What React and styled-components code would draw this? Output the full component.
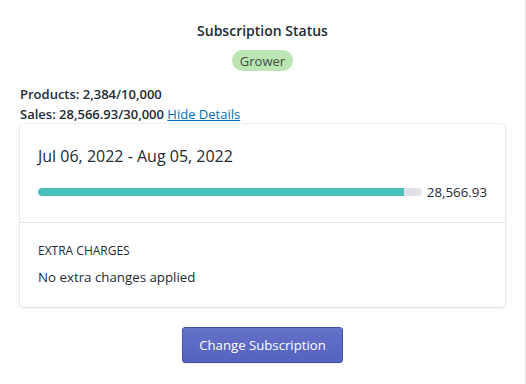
import React from 'react'
import styled, { createGlobalStyle } from 'styled-components'

const GlobalStyle = createGlobalStyle`
  body {
    margin: 0;
    background: #fff;
    font-family: "Open Sans", "Noto Sans", sans-serif;
    color: #212b36;
  }
`

const Page = styled.div`
  box-sizing: border-box;
  width: 526px;
  min-height: 384px;
  border-right: 1px solid #e1e3e5;
  padding: 19px 20px 20px 20px;
  display: flex;
  flex-direction: column;
`

const Heading = styled.h2`
  margin: 0;
  text-align: center;
  font-size: 14px;
  line-height: 24px;
  font-weight: 600;
`

const BadgeRow = styled.div`
  display: flex;
  justify-content: center;
  margin-top: 7px;
`

const Badge = styled.span`
  display: inline-flex;
  align-items: center;
  padding: 0 8px;
  height: 21px;
  border-radius: 12px;
  background: #bbe5b3;
  color: #414f3e;
  font-size: 13px;
`

const Stats = styled.div`
  margin-top: 13px;
  font-size: 13px;
  line-height: 20px;
`

const Stat = styled.div`
  font-weight: 600;
`

const Link = styled.a`
  font-weight: 400;
  color: #006fbb;
  text-decoration: underline;
  cursor: pointer;
`

const Card = styled.div`
  background: #fff;
  border-radius: 4px;
  box-shadow: 0 0 0 1px rgba(63, 63, 68, 0.06), 0 1px 3px 0 rgba(63, 63, 68, 0.15);
`

const Section = styled.div`
  padding: 20px 18px;
  & + & {
    border-top: 1px solid #dfe3e8;
  }
`

const Period = styled.div`
  font-size: 16px;
  line-height: 24px;
`

const BarRow = styled.div`
  display: grid;
  grid-template-columns: 1fr auto;
  align-items: center;
  gap: 5px;
  margin-top: 14px;
  font-size: 13.3px;
  line-height: 20px;
`

const Track = styled.div`
  height: 8px;
  border-radius: 4px;
  background: #dfe3e8;
  overflow: hidden;
`

const Fill = styled.div`
  height: 100%;
  background: #47c1bf;
  border-radius: 4px 0 0 4px;
`

const Subheading = styled.div`
  font-size: 12px;
  line-height: 16px;
  text-transform: uppercase;
  color: #212b36;
`

const Body = styled.div`
  margin-top: 8px;
  font-size: 13.3px;
  line-height: 20px;
  color: #212b36;
`

const Actions = styled.div`
  display: flex;
  justify-content: center;
  margin-top: 20px;
`

const Button = styled.button`
  height: 36px;
  padding: 0 16px;
  border: 1px solid #3f4eae;
  border-radius: 3px;
  background: linear-gradient(180deg, #6371c7, #5563c1);
  box-shadow: inset 0 1px 0 0 #6774c8, 0 1px 0 0 rgba(22, 29, 37, 0.05);
  color: #fff;
  font-family: inherit;
  font-size: 13.2px;
  cursor: pointer;
`

export default function App() {
  const sales = 28566.93
  const limit = 30000
  const pct = (sales / limit) * 100
  return (
    <>
      <GlobalStyle />
      <Page>
        <Heading>Subscription Status</Heading>
        <BadgeRow>
          <Badge>Grower</Badge>
        </BadgeRow>
        <Stats>
          <Stat>Products: 2,384/10,000</Stat>
          <Stat>
            Sales: 28,566.93/30,000 <Link>Hide Details</Link>
          </Stat>
        </Stats>
        <Card>
          <Section>
            <Period>Jul 06, 2022 - Aug 05, 2022</Period>
            <BarRow>
              <Track>
                <Fill style={{ width: `${pct}%` }} />
              </Track>
              <span>28,566.93</span>
            </BarRow>
          </Section>
          <Section>
            <Subheading>Extra Charges</Subheading>
            <Body>No extra changes applied</Body>
          </Section>
        </Card>
        <Actions>
          <Button>Change Subscription</Button>
        </Actions>
      </Page>
    </>
  )
}
